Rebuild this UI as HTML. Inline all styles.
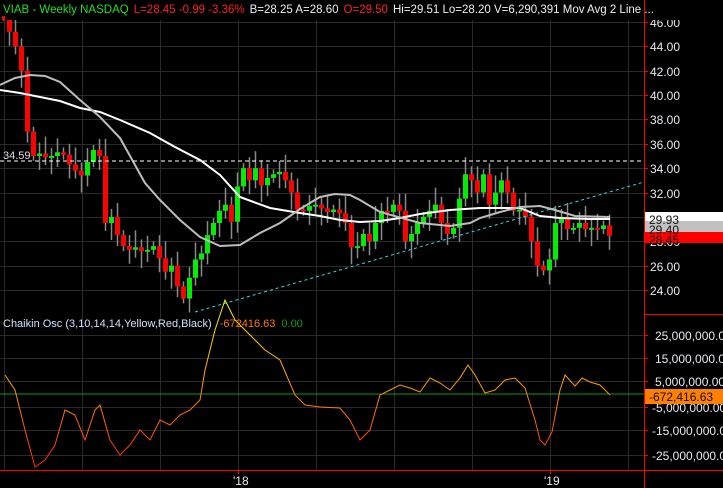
<!DOCTYPE html>
<html><head><meta charset="utf-8"><style>
html,body{margin:0;padding:0;background:#000;width:723px;height:488px;overflow:hidden}
svg{display:block;font-family:"Liberation Sans",sans-serif}
</style></head><body>
<svg id="s" width="723" height="488" viewBox="0 0 723 488" xmlns="http://www.w3.org/2000/svg">
<defs>
<linearGradient id="og" gradientUnits="userSpaceOnUse" x1="0" y1="300" x2="0" y2="470">
<stop offset="0" stop-color="#ffff00"/><stop offset="0.5" stop-color="#ff9900"/><stop offset="1" stop-color="#ff2000"/>
</linearGradient>
</defs>
<g id="grid" stroke="#2a2a2a" stroke-width="1"></g>
<g id="c"></g>
<polyline fill="none" stroke="#ffffff" stroke-width="2" points="0,90 20,93 40,97 60,101 80,108 100,112 120,120 150,133 175,147 200,160 220,175 240,197 270,208 300,213 320,216 340,220 360,222 380,221 400,218 420,214 450,210 480,208 520,208 540,216 560,218 590,219 610,219"/>
<polyline fill="none" stroke="#bdbdbd" stroke-width="2" points="0,85 15,78 30,75 45,76 60,82 80,100 100,117 120,138 145,183 160,200 180,220 200,237 220,246 240,245 260,233 280,223 300,209 320,197 335,194 350,195 360,200 380,212 420,223 450,226 470,223 480,218 500,212 520,207 540,206 555,210 575,216 610,217"/>
<line x1="0" y1="161" x2="644" y2="161" stroke="#fff" stroke-width="1" stroke-dasharray="4,3"/>
<line x1="195" y1="312" x2="644" y2="182" stroke="#33dddd" stroke-width="1" stroke-dasharray="3,3"/>
<text x="3" y="159" fill="#dde" font-size="11">34.59</text>
<line x1="0" y1="394" x2="644" y2="394" stroke="#119911" stroke-width="1"/>
<polyline fill="none" stroke="url(#og)" stroke-width="1" points="5,375 15,390 25,430 35,467 45,460 55,445 65,410 75,415 85,440 95,410 100,405 110,440 120,455 130,445 140,430 150,440 160,420 170,425 180,415 190,410 200,400 205,370 215,330 225,300 235,320 245,330 255,340 265,350 280,360 295,395 305,405 320,407 340,408 350,420 360,440 370,430 380,395 390,390 400,385 410,388 420,392 430,378 440,383 450,390 460,378 468,365 475,375 485,393 495,390 505,380 515,378 525,388 535,420 540,440 545,445 552,432 560,390 565,375 575,386 582,378 590,382 600,385 610,395"/>
<line x1="644.5" y1="0" x2="644.5" y2="488" stroke="#ff0000"/>
<line x1="644" y1="314.5" x2="723" y2="314.5" stroke="#ff0000"/>
<line x1="0" y1="470.5" x2="723" y2="470.5" stroke="#ff0000"/>
<line x1="238.5" y1="470" x2="238.5" y2="474" stroke="#ff0000"/>
<line x1="550.5" y1="470" x2="550.5" y2="474" stroke="#ff0000"/>
<g id="ax" fill="#e8e8f0" font-size="12"></g>
<rect x="645" y="212" width="78" height="9" fill="#fff"/>
<rect x="645" y="221" width="78" height="11" fill="#c0c0c0"/>
<rect x="645" y="232" width="78" height="11" fill="#ff0000"/>
<text x="649" y="224" fill="#111" font-size="12">29.93</text>
<text x="649" y="234" fill="#111" font-size="12">29.40</text>
<text x="649" y="244" fill="#111" font-size="12">28.45</text>
<rect x="645" y="389" width="78" height="15" fill="#ff8000"/>
<text x="649" y="401" fill="#111" font-size="12">-672,416.63</text>
<text x="233" y="485" fill="#e8e8f0" font-size="12">'18</text>
<text x="544" y="485" fill="#e8e8f0" font-size="12">'19</text>
<text x="3" y="327" font-size="11"><tspan fill="#cfe0ff">Chaikin Osc (3,10,14,14,Yellow,Red,Black)</tspan><tspan fill="#ff7700" dx="8">-672416.63</tspan><tspan fill="#119911" dx="6">0.00</tspan></text>
<rect x="0" y="0" width="723" height="20" fill="#000"/>
<text x="3" y="13" font-size="11.5"><tspan fill="#22dd22">VIAB - Weekly  NASDAQ</tspan><tspan fill="#ff2020" dx="5">L=28.45  -0.99  -3.36%</tspan><tspan fill="#f0f0f0" dx="5">B=28.25  A=28.60</tspan><tspan fill="#ff2020" dx="5">O=29.50</tspan><tspan fill="#f0f0f0" dx="5">Hi=29.51  Lo=28.20  V=6,290,391  Mov Avg 2 Line ...</tspan></text>
<line x1="644.5" y1="0" x2="644.5" y2="20" stroke="#ff0000"/>
<rect x="2" y="16" width="3" height="4" fill="#ff0000"/>
</svg>
<script>
var NS="http://www.w3.org/2000/svg";
function el(p,t,a){var e=document.createElementNS(NS,t);for(var k in a)e.setAttribute(k,a[k]);p.appendChild(e);return e;}
var Y=function(p){return 22+(46-p)*12.18;};
var g=document.getElementById('grid');
for(var x=4;x<644;x+=78)el(g,'line',{x1:x+.5,y1:20,x2:x+.5,y2:470});
for(var p=46;p>=24;p-=2)el(g,'line',{x1:0,y1:Math.round(Y(p))+.5,x2:644,y2:Math.round(Y(p))+.5});
[335,358,381,407,430,455].forEach(function(y){el(g,'line',{x1:0,y1:y+.5,x2:644,y2:y+.5});});
var ax=document.getElementById('ax');
for(var p=46;p>=24;p-=2){var y=Math.round(Y(p));el(ax,'line',{x1:644,y1:y+.5,x2:648,y2:y+.5,stroke:'#f00'});var t=el(ax,'text',{x:650,y:y+5});t.textContent=p.toFixed(2);}
var ov=[["25,000,000.00",335],["15,000,000.00",358],["5,000,000.00",381],["-5,000,000.00",407],["-15,000,000.00",430],["-25,000,000.00",455]];
ov.forEach(function(o){el(ax,'line',{x1:644,y1:o[1]+.5,x2:648,y2:o[1]+.5,stroke:'#f00'});var t=el(ax,'text',{x:o[0][0]=='-'?652:655,y:o[1]+5});t.textContent=o[0];});
var d=[[3,46.5],[9,45.2],[15,44],[21,42],[27,37],[33,35],[39,35.2],[45,34.9],[51,35],[57,35.3],[63,35.1],[69,34.3],[75,33.8],[81,33.4],[87,34.5],[93,35.5],[99,35],[105,29.5],[111,30],[117,28.5],[123,27.6],[129,27.3],[135,27.5],[141,27.2],[147,27.3],[153,27.6],[159,26.6],[165,25.5],[171,26],[177,24.3],[183,23.3],[189,25],[195,26.5],[201,27],[207,28.5],[213,29.5],[219,30.5],[225,31],[231,29.6],[237,32.5],[243,34],[249,33],[255,34],[261,32.6],[267,33.2],[273,33.5],[279,33.7],[285,33],[291,32],[297,30.6],[303,30.5],[309,30.9],[315,31],[321,30.7],[327,30.4],[333,30.6],[339,30.3],[345,29.5],[351,27.5],[357,27.6],[363,28.6],[369,28],[375,29.5],[381,30.5],[387,30.4],[393,31],[399,30.5],[405,28],[411,28.6],[417,29.5],[423,30],[429,30.5],[435,31],[441,29.5],[447,28.6],[453,29.1],[459,31.5],[465,33.5],[471,33],[477,32],[483,33.5],[489,31],[495,32],[501,33],[507,32],[513,30.5],[519,30.6],[525,30],[531,28],[537,26],[543,25.6],[549,26.5],[555,29.5],[561,30],[567,29],[573,29.1],[579,29.5],[585,29],[591,29.1],[597,29],[603,29.3],[609,28.45]];
var c=document.getElementById('c');
for(var i=0;i<d.length;i++){var x=d[i][0],cl=d[i][1],op=i?d[i-1][1]:47;
var hi=Math.max(op,cl)+0.4+((i*7)%5)*0.25,lo=Math.min(op,cl)-0.4-((i*3)%5)*0.25;
el(c,'line',{x1:x+.5,y1:Y(hi),x2:x+.5,y2:Y(lo),stroke:'#8a8a8a','stroke-width':1.5});
var t=Math.min(Y(op),Y(cl)),h=Math.max(2,Math.abs(Y(op)-Y(cl)));
el(c,'rect',{x:x-2,y:t,width:5,height:h,fill:cl>=op?'#00ee00':'#ff0000'});}
</script>
</body></html>
